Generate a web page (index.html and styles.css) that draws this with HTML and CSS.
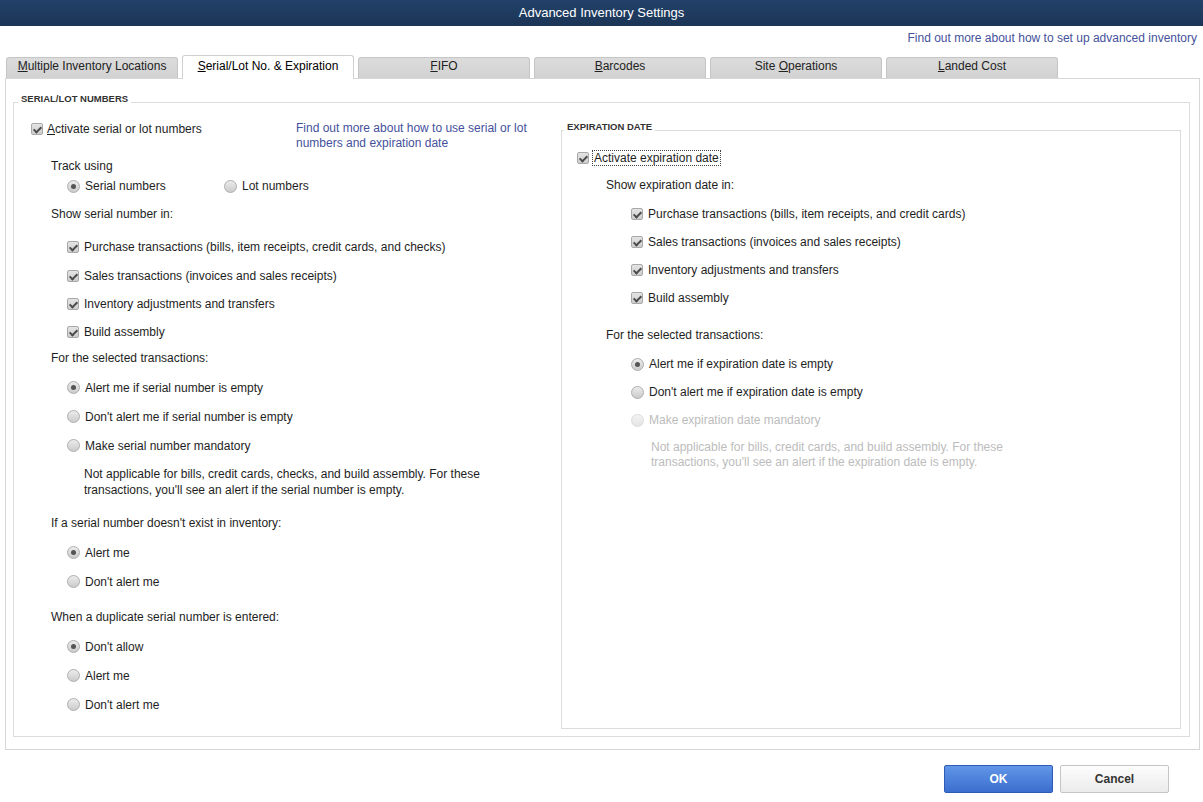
FILE: index.html
```html
<!DOCTYPE html>
<html lang="en">
<head>
<meta charset="UTF-8">
<meta name="viewport" content="width=device-width, initial-scale=1.0">
<title>Advanced Inventory Settings</title>
<link rel="stylesheet" href="styles.css">
</head>
<body>
    <div class="titlebar">Advanced Inventory Settings</div>
    <div class="toplink"><a class="link" href="#">Find out more about how to set up advanced inventory</a></div>

    <div class="tabs">
        <div class="tab"><u>M</u>ultiple Inventory Locations</div>
        <div class="tab active"><u>S</u>erial/Lot No. &amp; Expiration</div>
        <div class="tab"><u>F</u>IFO</div>
        <div class="tab"><u>B</u>arcodes</div>
        <div class="tab">Site <u>O</u>perations</div>
        <div class="tab"><u>L</u>anded Cost</div>
    </div>

    <div class="panel">
        <fieldset class="group outer">
            <legend>SERIAL/LOT NUMBERS</legend>
            <div class="cols">
                <div class="left">
                    <div class="intro">
                        <label class="row activate"><span class="cb"></span><span><u>A</u>ctivate serial or lot numbers</span></label>
                        <a class="link intro-link" href="#">Find out more about how to use serial or lot<br>numbers and expiration date</a>
                    </div>

                    <div class="heading h-track">Track using</div>
                    <div class="row track">
                        <label class="opt serial"><span class="rb on"></span>Serial numbers</label>
                        <label class="opt"><span class="rb"></span>Lot numbers</label>
                    </div>

                    <div class="heading h-show">Show serial number in:</div>
                    <div class="opts checks">
                        <label class="row"><span class="cb"></span>Purchase transactions (bills, item receipts, credit cards, and checks)</label>
                        <label class="row"><span class="cb"></span>Sales transactions (invoices and sales receipts)</label>
                        <label class="row"><span class="cb"></span>Inventory adjustments and transfers</label>
                        <label class="row"><span class="cb"></span>Build assembly</label>
                    </div>

                    <div class="heading h-select">For the selected transactions:</div>
                    <div class="opts">
                        <label class="row"><span class="rb on"></span>Alert me if serial number is empty</label>
                        <label class="row"><span class="rb"></span>Don't alert me if serial number is empty</label>
                        <label class="row"><span class="rb"></span>Make serial number mandatory</label>
                    </div>
                    <p class="note">Not applicable for bills, credit cards, checks, and build assembly. For these<br>transactions, you'll see an alert if the serial number is empty.</p>

                    <div class="heading h-exist">If a serial number doesn't exist in inventory:</div>
                    <div class="opts">
                        <label class="row"><span class="rb on"></span>Alert me</label>
                        <label class="row"><span class="rb"></span>Don't alert me</label>
                    </div>

                    <div class="heading h-dup">When a duplicate serial number is entered:</div>
                    <div class="opts">
                        <label class="row"><span class="rb on"></span>Don't allow</label>
                        <label class="row"><span class="rb"></span>Alert me</label>
                        <label class="row"><span class="rb"></span>Don't alert me</label>
                    </div>
                </div>

                <fieldset class="group inner">
                    <legend>EXPIRATION DATE</legend>
                    <div class="exp-body">
                        <label class="row activate"><span class="cb"></span><span class="focus">Activate expiration date</span></label>

                        <div class="heading e-show">Show expiration date in:</div>
                        <div class="opts e-checks">
                            <label class="row"><span class="cb"></span>Purchase transactions (bills, item receipts, and credit cards)</label>
                            <label class="row"><span class="cb"></span>Sales transactions (invoices and sales receipts)</label>
                            <label class="row"><span class="cb"></span>Inventory adjustments and transfers</label>
                            <label class="row"><span class="cb"></span>Build assembly</label>
                        </div>

                        <div class="heading e-select">For the selected transactions:</div>
                        <div class="opts e-radios">
                            <label class="row"><span class="rb on"></span>Alert me if expiration date is empty</label>
                            <label class="row"><span class="rb"></span>Don't alert me if expiration date is empty</label>
                            <label class="row disabled"><span class="rb"></span>Make expiration date mandatory</label>
                        </div>
                        <p class="note e-note">Not applicable for bills, credit cards, and build assembly. For these<br>transactions, you'll see an alert if the expiration date is empty.</p>
                    </div>
                </fieldset>
            </div>
        </fieldset>
    </div>

    <div class="actions">
        <button class="ok">OK</button>
        <button class="cancel">Cancel</button>
    </div>
</body>
</html>
```

FILE: styles.css
```css
body {
    margin: 0;
    font-family: "Liberation Sans", Arial, sans-serif;
    font-size: 12px;
    color: #1e1e1e;
    background: #fff;
}

.titlebar {
    height: 26px;
    line-height: 26px;
    text-align: center;
    color: #fff;
    font-size: 13px;
    background: linear-gradient(#22416a, #1b3555);
}

.toplink {
    height: 29px;
    box-sizing: border-box;
    padding: 5px 6px 0 0;
    text-align: right;
    line-height: 14px;
}

.link {
    color: #45519c;
    text-decoration: none;
}

/* tabs */
.tabs {
    display: flex;
    align-items: flex-end;
    gap: 4px;
    height: 23px;
    padding-left: 6px;
}

.tab {
    width: 172px;
    height: 21px;
    box-sizing: border-box;
    border: 1px solid #c6c6c6;
    border-bottom: none;
    border-radius: 3px 3px 0 0;
    background: linear-gradient(#dcdcdc, #d2d2d2);
    text-align: center;
    line-height: 17px;
    color: #222;
}

.tab.active {
    height: 24px;
    line-height: 21px;
    background: #fff;
    border-color: #cfcfcf;
    margin-bottom: -1px;
    position: relative;
    z-index: 1;
    color: #000;
}

/* panel */
.panel {
    margin: 0 3px 0 5px;
    border: 1px solid #d6d6d6;
    padding: 14px 9px 12px 7px;
}

fieldset.group {
    margin: 0;
    padding: 0;
    min-width: 0;
    border: 1px solid #dcdcdc;
}

legend {
    font-size: 9.5px;
    font-weight: bold;
    line-height: 12px;
    padding: 0 3px 6px;
    margin-left: 4px;
    color: #333;
}

.inner legend {
    margin-left: 2px;
}

.cols {
    display: grid;
    grid-template-columns: 1fr 620px;
    padding-right: 8px;
}

.left {
    padding: 8px 0 17px 17px;
}

.row {
    display: flex;
    align-items: center;
    gap: 5px;
}

.activate {
    height: 20px;
    gap: 4px;
}

.intro {
    display: flex;
    align-items: flex-start;
}

.intro .activate {
    width: 265px;
}

.intro-link {
    margin-top: 1.5px;
    line-height: 15px;
}

.heading {
    height: 16px;
    line-height: 16px;
    padding-left: 20px;
}

.h-track { margin-top: 7.5px; }
.h-show { margin-top: 10px; }
.h-select { margin-top: 3.4px; }
.h-exist { margin-top: 17px; }
.h-dup { margin-top: 12.5px; }

.track {
    height: 20px;
    margin-top: 2px;
    padding-left: 36px;
    gap: 0;
}

.opt {
    display: flex;
    align-items: center;
    gap: 5px;
}

.opt.serial {
    width: 157px;
}

.opts {
    margin-top: 7.5px;
    padding-left: 36px;
}

.opts .row {
    height: 29px;
}

.opts.checks {
    margin-top: 11px;
}

.opts.checks .row {
    height: 28.4px;
}

.note {
    margin: 5.5px 0 0;
    padding-left: 53px;
    line-height: 16px;
}

/* expiration block */
fieldset.inner {
    margin: 10px 0 7px;
}

.exp-body {
    padding: 9px 0 0 15px;
}

.exp-body .heading {
    padding-left: 29px;
}

.exp-body .opts {
    padding-left: 54px;
}

.e-show { margin-top: 9px; }
.e-select { margin-top: 15px; }

.exp-body .opts.e-checks,
.exp-body .opts.e-radios {
    margin-top: 7px;
}

.exp-body .opts .row {
    height: 28px;
}

.e-note {
    margin-top: 5.5px;
    padding-left: 74px;
    line-height: 15px;
    color: #bcbcbc;
}

.focus {
    outline: 1px dotted #444;
    outline-offset: 0;
    padding: 0 1px;
}

.disabled {
    color: #bcbcbc;
}

/* controls */
.cb {
    width: 12px;
    height: 12px;
    box-sizing: border-box;
    flex: none;
    border: 1px solid #a8a8a8;
    border-radius: 2px;
    background: linear-gradient(#e4e4e4, #cdcdcd);
    position: relative;
}

.cb::after {
    content: "";
    position: absolute;
    left: 3px;
    top: 1px;
    width: 3px;
    height: 6px;
    border: solid #4a4a4a;
    border-width: 0 2px 2px 0;
    transform: rotate(45deg);
}

.rb {
    width: 13px;
    height: 13px;
    box-sizing: border-box;
    flex: none;
    border: 1px solid #aeaeae;
    border-radius: 50%;
    background: linear-gradient(#ececec, #cbcbcb);
    position: relative;
}

.rb.on::after {
    content: "";
    position: absolute;
    left: 3px;
    top: 3px;
    width: 5px;
    height: 5px;
    border-radius: 50%;
    background: #555;
}

.disabled .rb {
    border-color: #dadada;
    background: linear-gradient(#f4f4f4, #e4e4e4);
}

/* buttons */
.actions {
    display: flex;
    justify-content: flex-end;
    gap: 7px;
    padding: 15px 34px 0 0;
}

button {
    width: 109px;
    height: 28px;
    font-family: "Liberation Sans", Arial, sans-serif;
    font-size: 12px;
    font-weight: bold;
    border-radius: 2px;
    cursor: pointer;
}

.ok {
    color: #fff;
    background: linear-gradient(#6196e8, #3b6ece);
    border: 1px solid #2d5bb5;
}

.cancel {
    color: #333;
    background: linear-gradient(#fdfdfd, #ebebeb);
    border: 1px solid #c5c5c5;
}
```
